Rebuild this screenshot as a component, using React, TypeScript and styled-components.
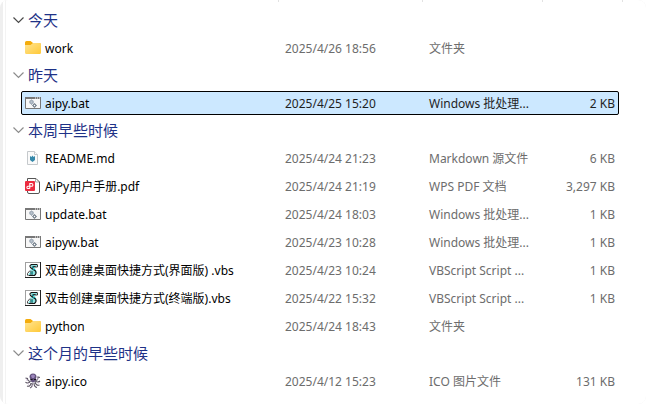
import React, { useState } from "react";
import styled, { createGlobalStyle } from "styled-components";

const GlobalStyle = createGlobalStyle`
  * { box-sizing: border-box; }
  body {
    margin: 0;
    background: #ffffff;
    font-family: "Noto Sans", "Noto Sans CJK SC", sans-serif;
    font-size: 12px;
    color: #000000;
  }
`;

const Window = styled.main`
  min-height: 100vh;
  padding-left: 3px;
  background: #efefef;
  border-radius: 8px;
  overflow: hidden;
`;

const Pane = styled.div`
  min-height: 100vh;
  background: #ffffff;
  padding-left: 2px;
`;

const List = styled.div`
  min-height: 100vh;
  border-left: 1px solid #f3f3f3;
`;

const columns = "minmax(0, 1fr) 144px 120px 80px";

const HeaderEdge = styled.div`
  display: grid;
  grid-template-columns: ${columns};
  height: 2px;
  margin-bottom: 5px;
  padding-right: 23px;
`;

const Divider = styled.span`
  border-right: 1px solid #e2e2e2;
`;

const FileTable = styled.table`
  display: block;
`;

const Group = styled.tbody`
  display: flex;
  flex-direction: column;
`;

const GroupRow = styled.tr`
  display: flex;
  height: 27px;
`;

const GroupCell = styled.th`
  display: flex;
  padding: 0 0 2px 7px;
  font-weight: 400;
`;

const GroupToggle = styled.button`
  display: flex;
  align-items: center;
  gap: 4px;
  padding: 0;
  border: 0;
  background: none;
  font-family: inherit;
  font-size: 15px;
  line-height: 20px;
  color: #1e3287;
`;

const FileRow = styled.tr<{ $selected: boolean }>`
  display: grid;
  grid-template-columns: ${columns};
  align-items: center;
  height: 24px;
  margin: 2px 27px 2px 15px;
  border: 1px solid ${(p) => (p.$selected ? "#000000" : "transparent")};
  border-radius: 2px;
  background: ${(p) => (p.$selected ? "#cce8ff" : "transparent")};
  color: ${(p) => (p.$selected ? "#1f1f1f" : "#6d6d6d")};
  line-height: 18px;
`;

const Cell = styled.td`
  padding: 2px 0 0 11px;
  white-space: nowrap;
`;

const NameCell = styled(Cell)`
  display: flex;
  align-items: center;
  gap: 4px;
  padding: 0 0 0 3px;
  color: #000000;
`;

const FileName = styled.span`
  padding-top: 2px;
`;

const SizeCell = styled(Cell)`
  padding: 2px 3px 0 0;
  text-align: right;
`;

const Icon = styled.svg`
  display: block;
  flex: none;
`;

type Kind = "folder" | "bat" | "md" | "pdf" | "vbs" | "ico";

function Chevron({ open, dark }: { open: boolean; dark: boolean }) {
  return (
    <Icon width="11" height="8" viewBox="0 0 11 8" fill="none" stroke={dark ? "#4a4a4a" : "#8c8c8c"} strokeWidth="1.2">
      <path d={open ? "M.5 1.5 5.5 6.5l5-5" : "M3.5 0 7.5 4l-4 4"} />
    </Icon>
  );
}

function FileIcon({ kind }: { kind: Kind }) {
  return (
    <Icon width="16" height="16" viewBox="0 0 16 16" aria-hidden="true">
      {kind === "folder" && (
        <>
          <defs>
            <linearGradient id="folder" x1="0" y1="0" x2="1" y2="1">
              <stop offset="0" stopColor="#ffe493" />
              <stop offset="1" stopColor="#ffc937" />
            </linearGradient>
          </defs>
          <path d="M0 2.5Q0 1 1.5 1h4L8 3h6.5Q16 3 16 4.5V8H0z" fill="#f4ac0c" />
          <path d="M0 5h5.5L8 3h6.5Q16 3 16 4.5v8Q16 14 14.5 14h-13Q0 14 0 12.5z" fill="url(#folder)" />
        </>
      )}
      {kind === "bat" && (
        <>
          <path d="M.5 2.5h15v11H.5z" fill="#f7f7f7" stroke="#777777" />
          <path d="M0 2h16v2H0z" fill="#777777" />
          <path d="M10 2.5h1v1h-1zM12 2.5h1v1h-1zM14 2.5h1v1h-1z" fill="#ffffff" />
          <circle cx="6.5" cy="7" r="1.5" fill="#c3ccd6" stroke="#a3aeba" strokeWidth="1.5" />
          <path d="M6.5 4.500v1M6.500 9v1M4 7h1M8 7h1" stroke="#a3aeba" />
          <circle cx="9.500" cy="10.500" r="1.300" fill="#ffffff" stroke="#7c8792" strokeWidth="1.200" />
          <path d="M9.500 8v1M9.500 12v1M7 10.500h1M11 10.500h1" stroke="#8d98a2" />
        </>
      )}
      {kind === "md" && (
        <>
          <path d="M2.500 1.500h7l3 3v10h-10z" fill="#fafafa" stroke="#c5c9cc" />
          <path d="M9.500 1.500v3h3" fill="#ffffff" stroke="#c5c9cc" />
          <path d="M5 6l1.500 1L7.500 5.500 8.500 7 10 6v4L7.500 12 5 10z" fill="#3588aa" />
        </>
      )}
      {kind === "pdf" && (
        <>
          <path d="M2.500.5H11L14.500 4v10q0 1.500-1.500 1.500H4q-1.500 0-1.500-1.500z" fill="#ffffff" stroke="#555555" />
          <path d="M10.500.5V4h4" fill="none" stroke="#777777" strokeWidth=".6" />
          <rect y="3" width="10" height="10" rx="1" fill="#ec2c40" />
          <path d="M4.800 10.500V5.500h1.700a1.400 1.400 0 0 1 0 2.800H3a1.100 1.100 0 0 0 0 2.200h1.800" fill="none" stroke="#ffffff" strokeWidth="1.100" />
        </>
      )}
      {kind === "vbs" && (
        <>
          <path d="M0 0h16v16H0z" fill="#222222" />
          <path d="M0 0h15v15H0z" fill="#a0a0a0" />
          <path d="M1 1h14v14H1z" fill="#ffffff" />
          <path d="M6 3h7l-2 2H6zM6 6h4l2 4-2 3H3l2-3z" fill="#8ce0df" />
          <path d="M12.500 2.500H6.500Q4 3.500 5.500 5.500L10.500 9Q12 11.500 9.500 13.500H3.500" fill="none" stroke="#151515" strokeWidth="1.100" />
          <path d="M7.500 4.500h3M5 10h3M5 12h3M12.500 3v2H9M5 8.500l-2.500 3v2" fill="none" stroke="#151515" strokeWidth=".8" />
          <path d="M7 5.500h2M8 7.500h2M6 11h2" stroke="#009a9c" />
        </>
      )}
      {kind === "ico" && (
        <>
          <path d="M6 8Q3 9 2.500 5.500L.5 5M5 9q-3 2-4.500 0M6 10q-.5 4-4 3M7 10q1 4-2 5M9 10q0 4 3 4.500M10 9q1 4 4.500 3M10 8q3 2 5 0M10 7q3 1 3-3l2 .5" fill="none" stroke="#5a5362" strokeWidth="1.100" />
          <path d="M4.500 4Q4.500.5 8 .5T11.500 4L10 8.500q-2 2-4 0z" fill="#62517c" />
          <path d="M6 3q0-1.500 2-1.500T10 3L9 5H7z" fill="#9c86bd" />
          <path d="M5.500 6h2v1h-2zM9 6h2v1H9z" fill="#17131d" />
          <path d="M1 7h1M3 11h1M7 13h1M13 10h1M12 6h1" stroke="#d5b8dc" />
        </>
      )}
    </Icon>
  );
}

type FileItem = { name: string; kind: Kind; date: string; type: string; size?: string };

const groups: { title: string; files: FileItem[] }[] = [
  { title: "今天", files: [{ name: "work", kind: "folder", date: "2025/4/26 18:56", type: "文件夹" }] },
  { title: "昨天", files: [{ name: "aipy.bat", kind: "bat", date: "2025/4/25 15:20", type: "Windows 批处理...", size: "2 KB" }] },
  {
    title: "本周早些时候",
    files: [
      { name: "README.md", kind: "md", date: "2025/4/24 21:23", type: "Markdown 源文件", size: "6 KB" },
      { name: "AiPy用户手册.pdf", kind: "pdf", date: "2025/4/24 21:19", type: "WPS PDF 文档", size: "3,297 KB" },
      { name: "update.bat", kind: "bat", date: "2025/4/24 18:03", type: "Windows 批处理...", size: "1 KB" },
      { name: "aipyw.bat", kind: "bat", date: "2025/4/23 10:28", type: "Windows 批处理...", size: "1 KB" },
      { name: "双击创建桌面快捷方式(界面版) .vbs", kind: "vbs", date: "2025/4/23 10:24", type: "VBScript Script ...", size: "1 KB" },
      { name: "双击创建桌面快捷方式(终端版).vbs", kind: "vbs", date: "2025/4/22 15:32", type: "VBScript Script ...", size: "1 KB" },
      { name: "python", kind: "folder", date: "2025/4/24 18:43", type: "文件夹" },
    ],
  },
  { title: "这个月的早些时候", files: [{ name: "aipy.ico", kind: "ico", date: "2025/4/12 15:23", type: "ICO 图片文件", size: "131 KB" }] },
];

export default function App() {
  const [selected, setSelected] = useState("aipy.bat");
  const [closed, setClosed] = useState<string[]>([]);

  const toggle = (title: string) =>
    setClosed((list) => (list.includes(title) ? list.filter((t) => t !== title) : [...list, title]));

  return (
    <Window>
      <GlobalStyle />
      <Pane>
        <List>
          <HeaderEdge>
            <Divider />
            <Divider />
            <Divider />
            <Divider />
          </HeaderEdge>
          <FileTable>
            {groups.map((group, index) => {
              const open = !closed.includes(group.title);
              return (
                <Group key={group.title}>
                  <GroupRow>
                    <GroupCell scope="rowgroup">
                      <GroupToggle type="button" aria-expanded={open} onClick={() => toggle(group.title)}>
                        <Chevron open={open} dark={index === 0} />
                        {group.title}
                      </GroupToggle>
                    </GroupCell>
                  </GroupRow>
                  {open &&
                    group.files.map((file) => (
                      <FileRow
                        key={file.name}
                        $selected={file.name === selected}
                        aria-selected={file.name === selected}
                        onClick={() => setSelected(file.name)}
                      >
                        <NameCell>
                          <FileIcon kind={file.kind} />
                          <FileName>{file.name}</FileName>
                        </NameCell>
                        <Cell>{file.date}</Cell>
                        <Cell>{file.type}</Cell>
                        <SizeCell>{file.size}</SizeCell>
                      </FileRow>
                    ))}
                </Group>
              );
            })}
          </FileTable>
        </List>
      </Pane>
    </Window>
  );
}
